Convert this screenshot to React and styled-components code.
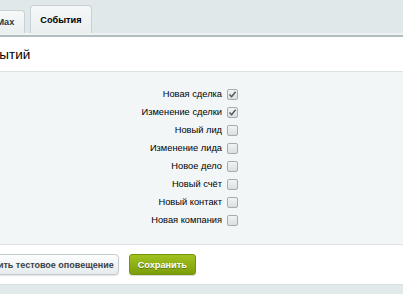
import React from "react";
import styled, { createGlobalStyle } from "styled-components";

const events = [
  { label: "Новая сделка", checked: true },
  { label: "Изменение сделки", checked: true },
  { label: "Новый лид", checked: false },
  { label: "Изменение лида", checked: false },
  { label: "Новое дело", checked: false },
  { label: "Новый счёт", checked: false },
  { label: "Новый контакт", checked: false },
  { label: "Новая компания", checked: false },
];

const App = () => {
  return (
    <>
      <GlobalStyle />
      <Page>
        <TabBar>
          <Tab $first>LeadMax</Tab>
          <Tab $active>События</Tab>
        </TabBar>
        <Panel>
          <Heading>Настройка событий</Heading>
          <Form>
            {events.map((e) => (
              <Row key={e.label}>
                <Label>{e.label}</Label>
                <Checkbox $checked={e.checked}>
                  {e.checked && (
                    <svg width="9" height="9" viewBox="0 0 9 9">
                      <path
                        d="M1.5 4.6 L3.6 6.8 L7.6 1.8"
                        fill="none"
                        stroke="#4d5558"
                        strokeWidth="1.4"
                      />
                    </svg>
                  )}
                </Checkbox>
              </Row>
            ))}
          </Form>
          <Footer>
            <Button>Отправить тестовое оповещение</Button>
            <SaveButton>Сохранить</SaveButton>
          </Footer>
        </Panel>
        <Bottom />
      </Page>
    </>
  );
};

const GlobalStyle = createGlobalStyle`
  body {
    margin: 0;
    background: #e2e9eb;
    font-family: "Liberation Sans", Arial, sans-serif;
    overflow: hidden;
  }
`;

const Page = styled.div`
  width: 403px;
  height: 294px;
  overflow: hidden;
  background: #e2e9eb;
`;

const TabBar = styled.div`
  display: flex;
  align-items: flex-end;
  gap: 5px;
  height: 33px;
  background: #e1e8ea;
  border-bottom: 2px solid #eef2f3;
`;

const Tab = styled.div`
  box-sizing: border-box;
  height: ${(p) => (p.$active ? "28px" : "23px")};
  margin-left: ${(p) => (p.$first ? "-36px" : "0")};
  padding: 0 ${(p) => (p.$active ? "9px" : "10px")};
  display: flex;
  align-items: center;
  font-size: 9.2px;
  font-weight: bold;
  color: ${(p) => (p.$active ? "#000" : "#2a3a40")};
  background: ${(p) =>
    p.$active
      ? "linear-gradient(#f6f8f8, #e9eeef)"
      : "linear-gradient(#f7f9f9, #eaeff0)"};
  border: 1px solid #c8d1d4;
  border-bottom: none;
  border-radius: 4px 4px 0 0;
`;

const Panel = styled.div`
  background: #fff;
  border-top: 2px solid #b3bdc0;
`;

const Heading = styled.h2`
  margin: 0 0 0 -93px;
  height: 34px;
  display: flex;
  align-items: center;
  font-size: 13.5px;
  font-weight: normal;
  color: #000;
  white-space: nowrap;
`;

const Form = styled.div`
  background: #f2f6f7;
  border-top: 1px solid #dbe2e4;
  border-bottom: 1px solid #dbe2e4;
  padding: 13px 0 15px;
  display: flex;
  flex-direction: column;
`;

const Row = styled.div`
  display: grid;
  grid-template-columns: 222px 12px;
  gap: 5px;
  align-items: center;
  height: 18px;
`;

const Label = styled.span`
  text-align: right;
  font-size: 9.3px;
  color: #000;
  white-space: nowrap;
`;

const Checkbox = styled.span`
  box-sizing: border-box;
  width: 11px;
  height: 11px;
  border: 1px solid #a4aeb2;
  border-radius: 2px;
  background: linear-gradient(#f2f4f5, #d9dfe1);
  display: flex;
  align-items: center;
  justify-content: center;
`;

const Footer = styled.div`
  display: flex;
  align-items: center;
  gap: 10px;
  height: 39px;
`;

const Button = styled.button`
  height: 21px;
  margin-left: -44px;
  padding: 0 4px 0 8px;
  font-family: inherit;
  font-size: 9px;
  font-weight: bold;
  color: #3b4144;
  white-space: nowrap;
  background: linear-gradient(#fdfefe, #e6ebed);
  border: 1px solid #c5ccce;
  border-radius: 4px;
  box-shadow: 0 1px 1px rgba(0, 0, 0, 0.12);
`;

const SaveButton = styled.button`
  height: 21px;
  width: 67px;
  padding: 0;
  font-family: inherit;
  font-size: 9.2px;
  font-weight: bold;
  color: #fff;
  text-shadow: 0 1px 0 rgba(60, 80, 0, 0.6);
  background: linear-gradient(#a1c21e, #7c9e0b);
  border: 1px solid #74950a;
  border-radius: 3px;
  box-shadow: 0 1px 1px rgba(0, 0, 0, 0.15);
`;

const Bottom = styled.div`
  height: 10px;
  background: #e2e9eb;
  border-top: 1px solid #d7dfe1;
`;

export default App;
